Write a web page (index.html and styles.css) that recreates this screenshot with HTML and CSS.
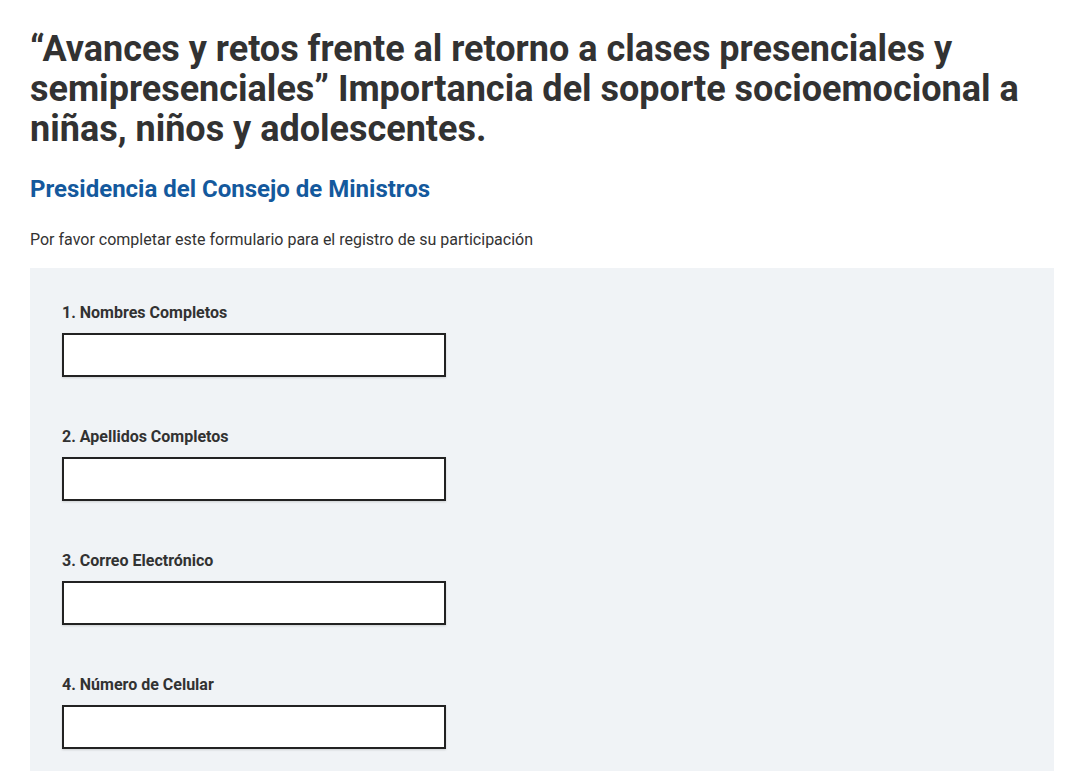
FILE: index.html
```html
<!DOCTYPE html>
<html lang="es">
<head>
<meta charset="utf-8">
<title>Registro</title>
<link rel="stylesheet" href="styles.css">
</head>
<body>
<main class="page">
  <h1 class="title">“Avances y retos frente al retorno a clases presenciales y semipresenciales” Importancia del soporte socioemocional a niñas, niños y adolescentes.</h1>
  <h2 class="org">Presidencia del Consejo de Ministros</h2>
  <p class="intro">Por favor completar este formulario para el registro de su participación</p>
  <form class="panel">
    <div class="field">
      <label class="label" for="f1">1. Nombres Completos</label>
      <input class="input" id="f1" type="text">
    </div>
    <div class="field">
      <label class="label" for="f2">2. Apellidos Completos</label>
      <input class="input" id="f2" type="text">
    </div>
    <div class="field">
      <label class="label" for="f3">3. Correo Electrónico</label>
      <input class="input" id="f3" type="email">
    </div>
    <div class="field">
      <label class="label" for="f4">4. Número de Celular</label>
      <input class="input" id="f4" type="tel">
    </div>
  </form>
</main>
</body>
</html>
```
FILE: styles.css
```css
html, body {
  margin: 0;
  padding: 0;
  background: #ffffff;
}
body {
  font-family: Roboto, "Liberation Sans", Arial, sans-serif;
  color: #323232;
}
.page {
  padding: 29px 16px 0 30px;
}
.title {
  margin: 0;
  font-size: 36px;
  line-height: 40px;
  font-weight: 700;
  color: #323232;
  max-width: 1010px;
}
.org {
  margin: 26px 0 0;
  font-size: 24px;
  line-height: 28px;
  font-weight: 700;
  color: #14599d;
}
.intro {
  margin: 27px 0 0;
  font-size: 16px;
  line-height: 20px;
  color: #333;
}
.panel {
  margin-top: 18px;
  background: #f0f3f6;
  padding: 35px 32px 40px;
  display: flex;
  flex-direction: column;
  gap: 50px;
}
.field {
  display: flex;
  flex-direction: column;
  gap: 10px;
}
.label {
  font-size: 16px;
  line-height: 20px;
  font-weight: 700;
  color: #323232;
}
.input {
  box-sizing: border-box;
  width: 384px;
  height: 44px;
  margin: 0;
  border: 2px solid #222;
  border-radius: 0;
  background: #fff;
  box-shadow: 0 1px 2px rgba(0,0,0,0.15);
}
```
